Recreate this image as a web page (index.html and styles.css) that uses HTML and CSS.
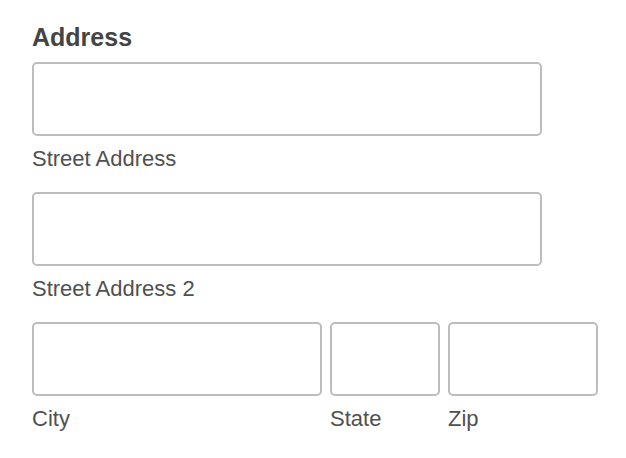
FILE: index.html
```html
<!DOCTYPE html>
<html>
<head>
<meta charset="utf-8">
<link rel="stylesheet" href="styles.css">
</head>
<body>
<div class="form">
  <h2 class="title">Address</h2>
  <div class="field">
    <div class="input wide"></div>
    <div class="label">Street Address</div>
  </div>
  <div class="field">
    <div class="input wide"></div>
    <div class="label">Street Address 2</div>
  </div>
  <div class="row">
    <div class="field city">
      <div class="input"></div>
      <div class="label">City</div>
    </div>
    <div class="field state">
      <div class="input"></div>
      <div class="label">State</div>
    </div>
    <div class="field zip">
      <div class="input"></div>
      <div class="label">Zip</div>
    </div>
  </div>
</div>
</body>
</html>
```
FILE: styles.css
```css
html, body {
  margin: 0;
  padding: 0;
  background: #fff;
}
body {
  font-family: "Liberation Sans", Arial, sans-serif;
  color: #4a4a4a;
}
.form {
  padding: 23px 0 0 32px;
}
.title {
  margin: 0 0 11px 0;
  font-size: 25px;
  line-height: 28px;
  font-weight: bold;
  color: #444;
}
.field {
  margin-bottom: 21px;
}
.input {
  box-sizing: border-box;
  height: 74px;
  border: 2px solid #bdbdbd;
  border-radius: 5px;
  background: #fff;
}
.input.wide {
  width: 510px;
}
.label {
  margin-top: 11px;
  font-size: 22px;
  line-height: 24px;
  color: #505050;
}
.row {
  display: flex;
  gap: 8px;
}
.city { width: 290px; }
.state { width: 110px; }
.zip { width: 150px; }
```
